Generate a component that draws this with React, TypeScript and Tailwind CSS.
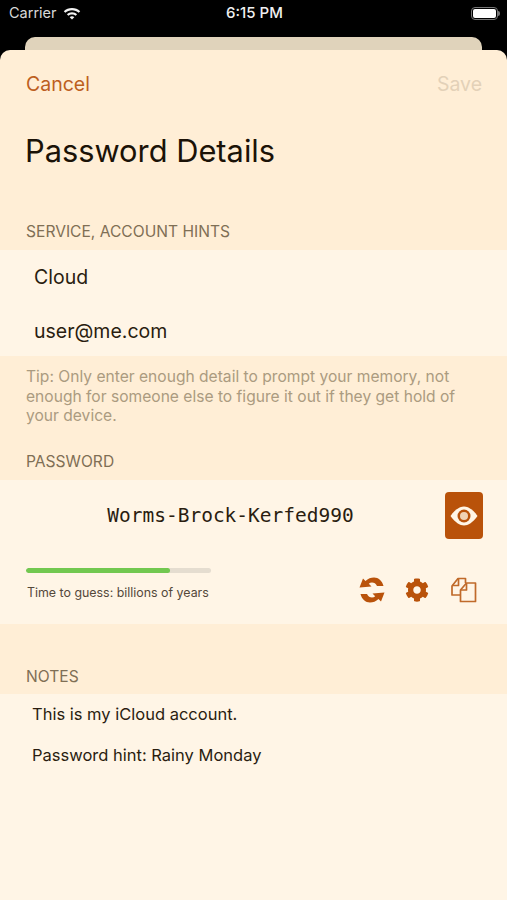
import { FaCog } from "react-icons/fa";

const SectionLabel = ({ text }: { text: string }) => (
    <div className="text-[15.6px] leading-[20px] text-[#7f6f55]">{text}</div>
);

const SyncIcon = () => (
    <svg width="26" height="26" viewBox="0 0 26 26" fill="#b9520a">
        <path d="M.5 10.500 4 1.500 6.500 4C9 1.500 12 .5 15 .5c4.500 0 8 3 9.500 8.500H18c-1-2.500-3-3.500-5-3.500-1.300 0-2.300.4-3.200 1.200l2.700 2.800Z" />
        <path d="M25.500 15.500 22 24.500 19.500 22C17 24.500 14 25.500 11 25.500c-4.500 0-8-3-9.500-8.500H8c1 2.500 3 3.500 5 3.500 1.300 0 2.300-.4 3.200-1.200l-2.700-2.800Z" />
    </svg>
);

const CopyIcon = () => (
    <svg width="26" height="26" viewBox="0 0 26 26" fill="none" stroke="#c06a2a" strokeWidth="1.700" strokeLinejoin="round">
        <path d="M9 18H1V9L7 1.500H14.500V6" />
        <path d="M7.500 1.500V8.500H1" />
        <path d="M9.500 24.500V13L15.500 6H24.500V24.500Z" fill="#fff5e6" />
        <path d="M15.500 6V13H9.500" />
    </svg>
);

const EyeIcon = () => (
    <svg width="28" height="20" viewBox="0 0 28 20">
        <path d="M.5 10C5 3.500 10 .5 14 .5S23 3.500 27.500 10C23 16.500 18 19.500 14 19.500S5 16.500 .5 10Z" fill="#fff5e6" />
        <circle cx="14" cy="10" r="6.500" fill="#b9520a" />
        <circle cx="14" cy="10" r="4" fill="#f0d2b4" />
    </svg>
);

export default function App() {
    return (
        <div className="h-[900px] w-[507px] overflow-hidden bg-black font-['Inter',sans-serif]">
            <div className="grid h-[37px] grid-cols-3 items-start pl-[9px] pr-[7px] pt-[4px] text-white">
                <div className="flex items-center gap-[6px] text-[14.500px] leading-[18px] text-[#d8d8d8]">
                    Carrier
                    <svg width="18" height="14" viewBox="0 0 18 14" fill="#f2f2f2">
                        <path d="M9 2C5.800 2 3 3.200.8 5.200l1.500 1.600C4.100 5.200 6.400 4.200 9 4.200s4.900 1 6.700 2.600l1.500-1.600C15 3.200 12.200 2 9 2Z" />
                        <path d="M9 6.200c-2 0-3.800.8-5.100 2l1.500 1.600C6.300 8.900 7.600 8.400 9 8.400s2.700.5 3.600 1.400l1.500-1.600C12.800 7 11 6.200 9 6.200Z" />
                        <path d="M9 10.300c-.9 0-1.700.3-2.300.9L9 13.500l2.300-2.300c-.6-.6-1.400-.9-2.300-.9Z" />
                    </svg>
                </div>
                <div className="text-center text-[15px] font-medium leading-[18px] text-[#f0f0f0]">6:15 PM</div>
                <div className="flex items-center justify-end pt-[3px]">
                    <div className="h-[13px] w-[27px] rounded-[4px] border border-[#777] p-[1px]">
                        <div className="h-full w-full rounded-[2px] bg-white" />
                    </div>
                    <div className="h-[5px] w-[2px] rounded-r-sm bg-[#777]" />
                </div>
            </div>

            <div className="mx-[25px] h-[13px] rounded-t-[10px] bg-[#e0d3bb]" />

            <div className="h-[850px] overflow-hidden rounded-t-[10px] bg-[#ffeed6]">
                <div className="flex h-[200px] flex-col pl-[26px] pr-[25px]">
                    <div className="flex justify-between pt-[22px] text-[19.500px] leading-[25px]">
                        <span className="text-[#bd5f1f]">Cancel</span>
                        <span className="text-[#e3d1b8]">Save</span>
                    </div>
                    <h1 className="-ml-[1px] mt-[34px] text-[30.800px] font-normal leading-[40px] text-[#1b1207]">Password Details</h1>
                    <div className="mt-[51px]">
                        <SectionLabel text="SERVICE, ACCOUNT HINTS" />
                    </div>
                </div>

                <div className="flex h-[106px] flex-col bg-[#fff5e6] pl-[34px] text-[19.500px] leading-[26px] text-[#2a1d10]">
                    <div className="pt-[14px]">Cloud</div>
                    <div className="pt-[28px]">user@me.com</div>
                </div>

                <div className="h-[124px] pl-[26px] pr-[25px] pt-[11px]">
                    <p className="text-[15.600px] leading-[19.500px] text-[#ab9b80]">
                        Tip: Only enter enough detail to prompt your memory, not enough for someone else to figure it out if they get hold of your device.
                    </p>
                    <div className="mt-[26px]">
                        <SectionLabel text="PASSWORD" />
                    </div>
                </div>

                <div className="h-[144px] bg-[#fff5e6] pl-[26px] pr-[24px]">
                    <div className="flex h-[72px] items-start justify-between pt-[12px]">
                        <div className="w-[404px] pl-[5px] pt-[12px] text-center font-['DejaVu_Sans_Mono',monospace] text-[19.500px] leading-[24px] text-[#2a1d10]">
                            Worms-Brock-Kerfed990
                        </div>
                        <div className="flex h-[47px] w-[38px] items-center justify-center rounded-[4px] bg-[#b9520a]">
                            <EyeIcon />
                        </div>
                    </div>
                    <div className="flex items-start justify-between pt-[16px]">
                        <div className="w-[185px]">
                            <div className="h-[5px] overflow-hidden rounded-full bg-[#e5ddd0]">
                                <div className="h-full w-[144px] rounded-full bg-[#72c850]" />
                            </div>
                            <div className="mt-[12px] pl-[1px] text-[12.400px] leading-[16px] text-[#54483a]">Time to guess: billions of years</div>
                        </div>
                        <div className="flex items-center pr-[6px] pt-[9px]">
                            <SyncIcon />
                            <FaCog className="ml-[20px] mr-[22px] text-[24px] text-[#b9520a]" />
                            <CopyIcon />
                        </div>
                    </div>
                </div>

                <div className="flex h-[70px] items-end pb-[7px] pl-[26px]">
                    <SectionLabel text="NOTES" />
                </div>

                <div className="h-[206px] bg-[#fff5e6] pl-[32px] pt-[9px] text-[16.500px] leading-[22px] text-[#2a1d10]">
                    <p>This is my iCloud account.</p>
                    <p className="mt-[19px]">Password hint: Rainy Monday</p>
                </div>
            </div>
        </div>
    );
}
